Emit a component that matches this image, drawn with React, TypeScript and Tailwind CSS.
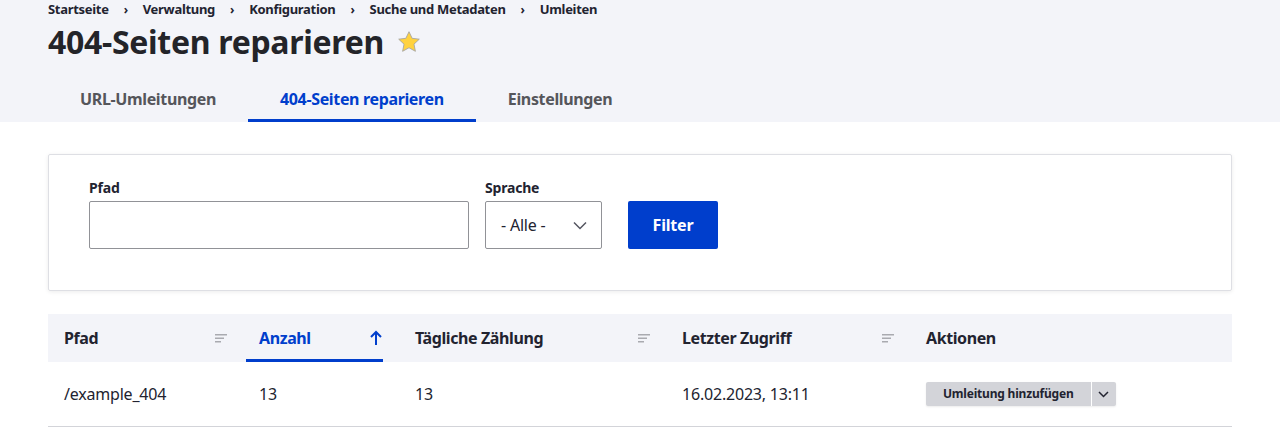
import React from 'react'

const font = { fontFamily: '"Noto Sans", "Open Sans", sans-serif' }

function SortIcon() {
  return (
    <svg width="12" height="10" viewBox="0 0 12 10" className="shrink-0">
      <rect x="0" y="1" width="12" height="1.5" fill="#a9aab0" />
      <rect x="0" y="4.5" width="9" height="1.5" fill="#a9aab0" />
      <rect x="0" y="8" width="6" height="1.5" fill="#a9aab0" />
    </svg>
  )
}

function Star() {
  return (
    <svg width="26" height="26" viewBox="0 0 24 24">
      <path
        d="M12 2.5l2.9 6.1 6.6.8-4.9 4.6 1.3 6.6L12 17.3l-5.9 3.3 1.3-6.6-4.9-4.6 6.6-.8z"
        fill="#ffd23f"
        stroke="#a3a3a3"
        strokeWidth="0.8"
        strokeLinejoin="round"
      />
    </svg>
  )
}

export default function App() {
  const crumbs = ['Startseite', 'Verwaltung', 'Konfiguration', 'Suche und Metadaten', 'Umleiten']

  return (
    <div className="w-[1280px] h-[447px] bg-white text-[#222330] overflow-hidden tracking-[-0.2px]" style={font}>
      {/* Header */}
      <div className="bg-[#f3f4f9] px-12">
        <div className="flex items-center h-[19px] text-[13px] font-bold tracking-[-0.3px]">
          {crumbs.map((c, i) => (
            <React.Fragment key={c}>
              {i > 0 && <span className="mx-[15px] text-[12px]">›</span>}
              <span>{c}</span>
            </React.Fragment>
          ))}
        </div>
        <div className="flex items-center h-[46px] gap-3">
          <h1 className="text-[32px] font-bold leading-none text-[#232429] tracking-[-0.3px]">404-Seiten reparieren</h1>
          <Star />
        </div>
        <div className="flex mt-[10px] h-[47px] text-[16px] font-bold tracking-[-0.35px]">
          <div className="px-8 flex items-center text-[#55565b]">URL-Umleitungen</div>
          <div className="px-8 flex items-center text-[#003ecc] border-b-[3px] border-[#003ecc] pt-[3px]">
            404-Seiten reparieren
          </div>
          <div className="px-8 flex items-center text-[#55565b]">Einstellungen</div>
        </div>
      </div>

      {/* Filter card */}
      <div className="mx-12 mt-8 border border-[#dedfe4] rounded-[2px] shadow-[0_1px_4px_rgba(0,0,0,0.08)] px-10 pt-[24px] pb-[41px] flex items-end gap-4">
        <div className="flex flex-col">
          <label className="text-[14px] font-bold mb-[4px] leading-[18px]">Pfad</label>
          <div className="w-[380px] h-[48px] border border-[#919297] rounded-[2px] bg-white" />
        </div>
        <div className="flex flex-col">
          <label className="text-[14px] font-bold mb-[4px] leading-[18px]">Sprache</label>
          <div className="w-[117px] h-[48px] border border-[#919297] rounded-[2px] bg-white flex items-center justify-between pl-[15px] pr-[14px] text-[16px]">
            <span>- Alle -</span>
            <svg width="14" height="9" viewBox="0 0 14 9">
              <path d="M1 1.5l6 6 6-6" fill="none" stroke="#545560" strokeWidth="1.5" />
            </svg>
          </div>
        </div>
        <button className="ml-[10px] h-[48px] w-[90px] bg-[#003ecc] text-white font-bold text-[16px] rounded-[2px]">
          Filter
        </button>
      </div>

      {/* Table */}
      <div className="mx-12 mt-[23px]">
        <div className="grid grid-cols-[195px_156px_267px_244px_1fr] h-[48px] bg-[#f3f4f9] text-[16px] font-bold tracking-[-0.4px]">
          <div className="flex items-center justify-between px-4">
            <span>Pfad</span>
            <SortIcon />
          </div>
          <div className="flex items-stretch pl-[3px] pr-4">
            <div className="flex-1 flex items-center justify-between pl-[13px] pr-[1px] border-b-[3px] border-[#003ecc] text-[#003ecc] pt-[3px]">
              <span>Anzahl</span>
              <svg width="12" height="16" viewBox="0 0 12 16">
                <path d="M6 15V2M1 7l5-5 5 5" fill="none" stroke="#003ecc" strokeWidth="2" />
              </svg>
            </div>
          </div>
          <div className="flex items-center justify-between px-4">
            <span>Tägliche Zählung</span>
            <SortIcon />
          </div>
          <div className="flex items-center justify-between px-4">
            <span>Letzter Zugriff</span>
            <SortIcon />
          </div>
          <div className="flex items-center px-4">
            <span>Aktionen</span>
          </div>
        </div>
        <div className="grid grid-cols-[195px_156px_267px_244px_1fr] h-[65px] border-b border-[#d3d4d9] text-[16px] items-center">
          <div className="px-4">/example_404</div>
          <div className="px-4">13</div>
          <div className="px-4">13</div>
          <div className="px-4">16.02.2023, 13:11</div>
          <div className="px-4 flex">
            <div className="flex h-[24px] rounded-[2px] bg-[#d3d4d9] shadow-[0_1px_2px_rgba(0,0,0,0.08)] text-[12px] font-bold">
              <span className="pl-[17px] pr-[17px] flex items-center">Umleitung hinzufügen</span>
              <span className="w-[25px] border-l border-white flex items-center justify-center">
                <svg width="11" height="7" viewBox="0 0 11 7">
                  <path d="M1 1l4.5 4.5L10 1" fill="none" stroke="#222330" strokeWidth="1.5" />
                </svg>
              </span>
            </div>
          </div>
        </div>
      </div>
    </div>
  )
}
